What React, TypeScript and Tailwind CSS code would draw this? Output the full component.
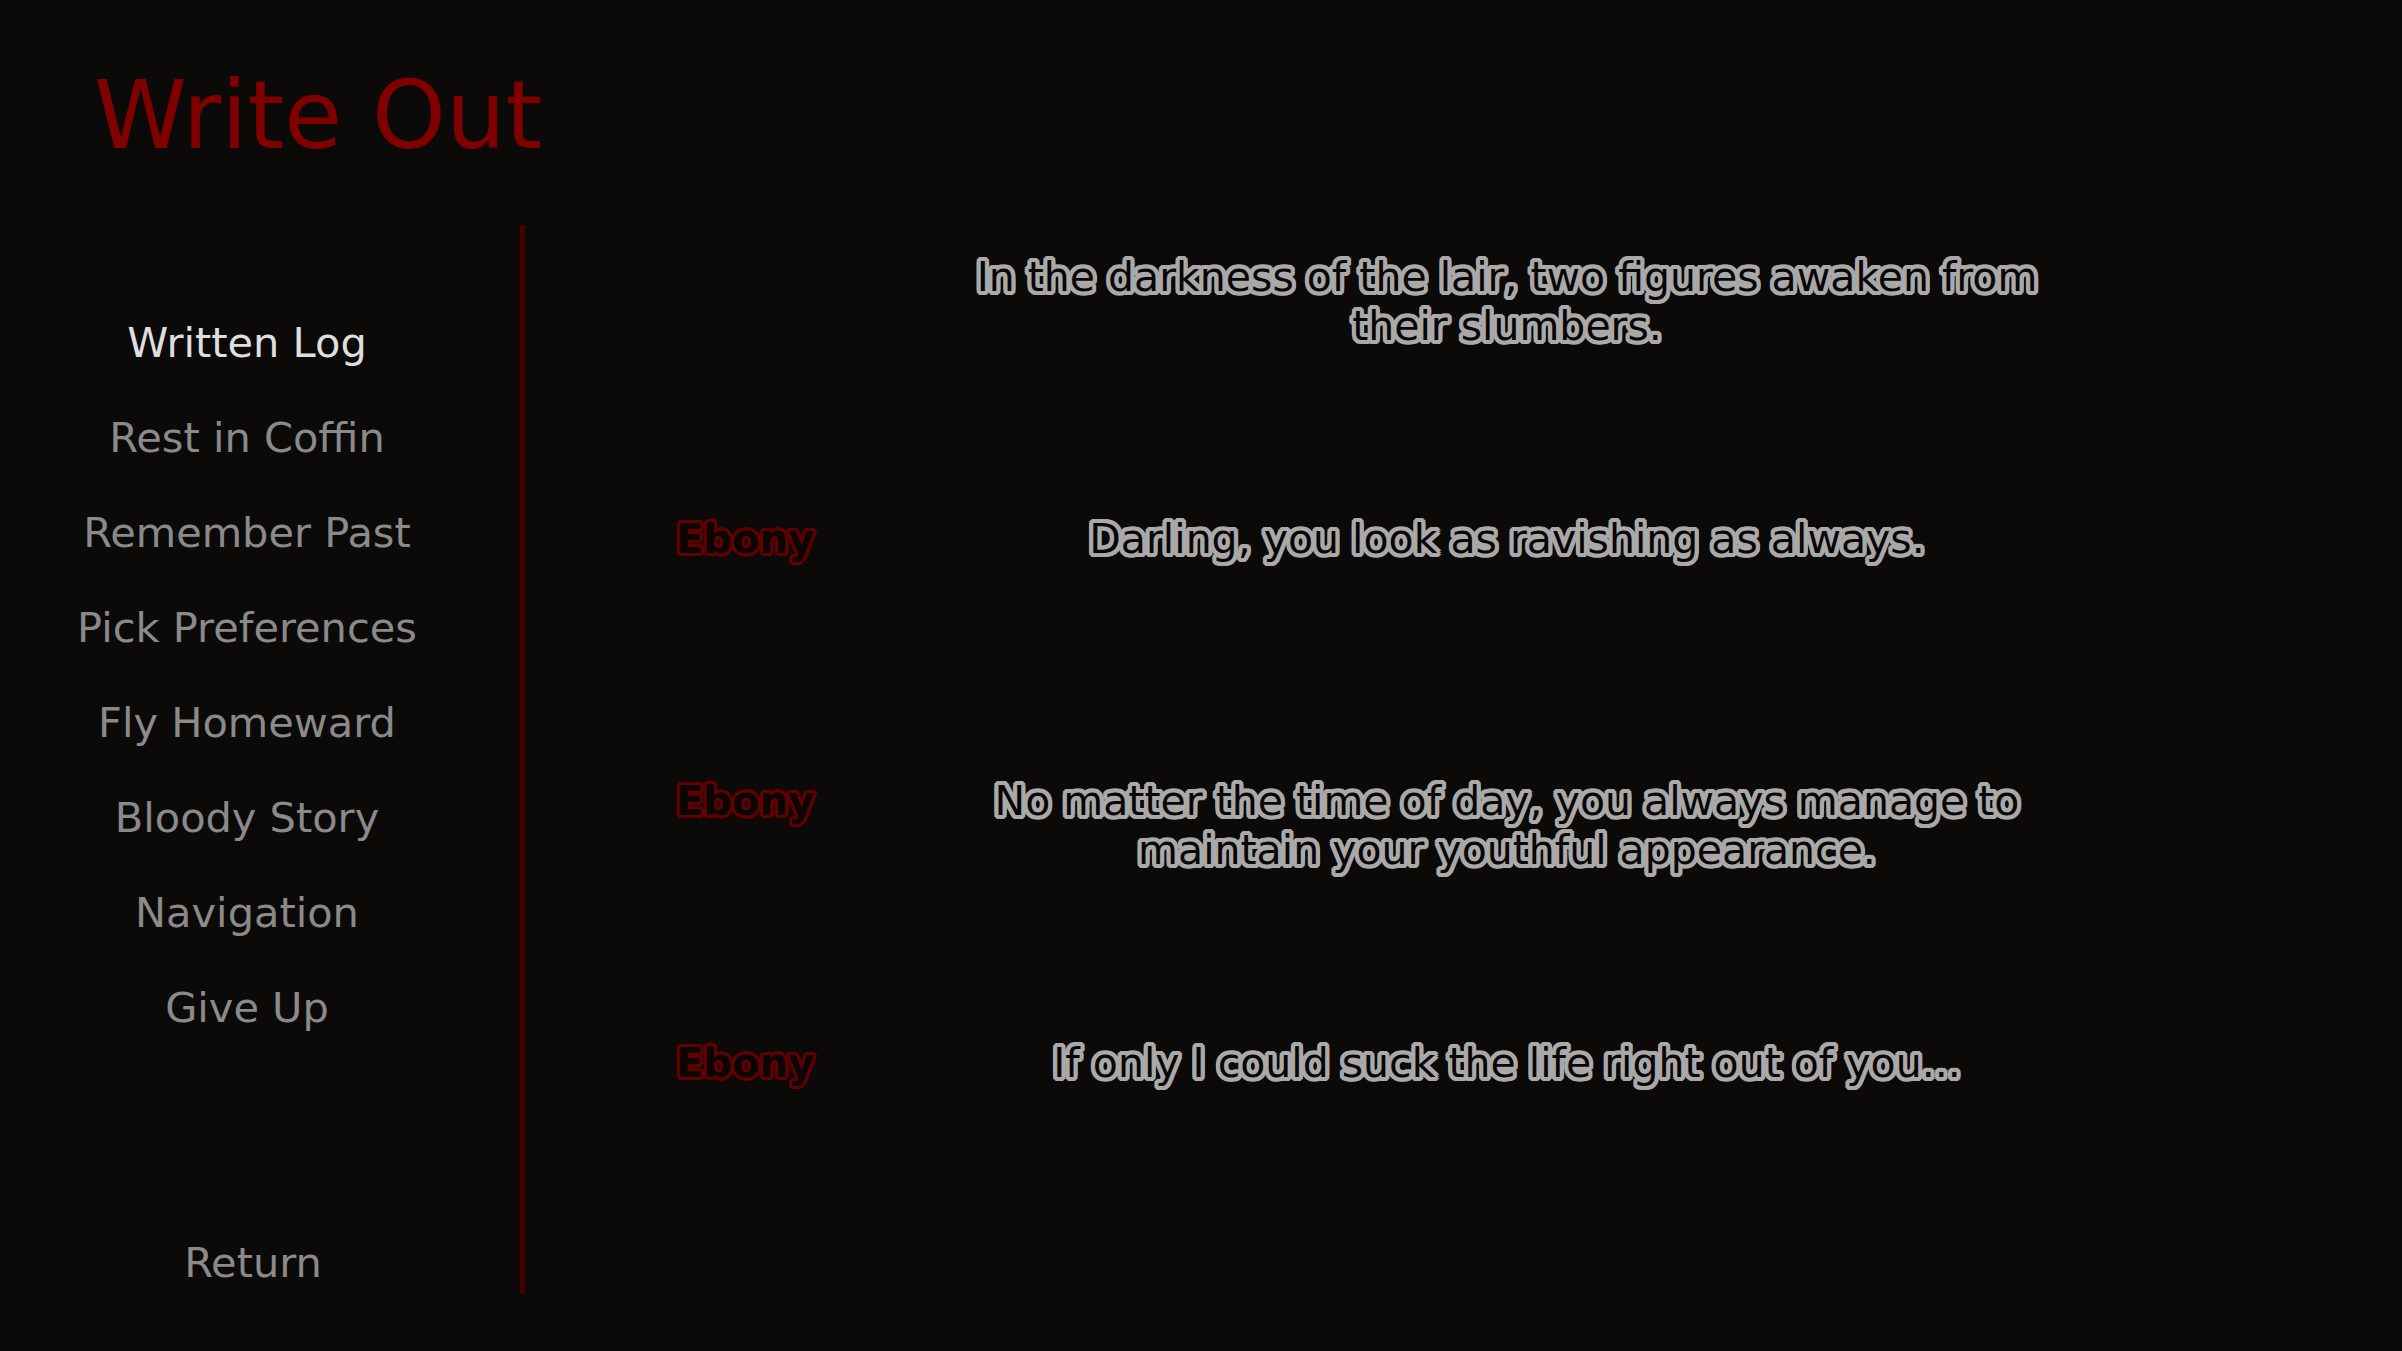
import React from "react";

const menuItems = [
  "Written Log",
  "Rest in Coffin",
  "Remember Past",
  "Pick Preferences",
  "Fly Homeward",
  "Bloody Story",
  "Navigation",
  "Give Up",
];

type Entry = { who?: string; what: string };

const history: Entry[] = [
  { what: "In the darkness of the lair, two figures awaken from their slumbers." },
  { who: "Ebony", what: "Darling, you look as ravishing as always." },
  { who: "Ebony", what: "No matter the time of day, you always manage to maintain your youthful appearance." },
  { who: "Ebony", what: "If only I could suck the life right out of you..." },
];

// outline look, like the game's text outlines
const grayOutline =
  "[text-shadow:4px_0_0_#a9a9a9,-4px_0_0_#a9a9a9,0_4px_0_#a9a9a9,0_-4px_0_#a9a9a9,3px_3px_0_#a9a9a9,-3px_3px_0_#a9a9a9,3px_-3px_0_#a9a9a9,-3px_-3px_0_#a9a9a9,4px_2px_0_#a9a9a9,4px_-2px_0_#a9a9a9,-4px_2px_0_#a9a9a9,-4px_-2px_0_#a9a9a9,2px_4px_0_#a9a9a9,-2px_4px_0_#a9a9a9,2px_-4px_0_#a9a9a9,-2px_-4px_0_#a9a9a9,2px_2px_0_#a9a9a9,-2px_-2px_0_#a9a9a9,2px_-2px_0_#a9a9a9,-2px_2px_0_#a9a9a9]";
const redOutline =
  "[text-shadow:3px_0_0_#620000,-3px_0_0_#620000,0_3px_0_#620000,0_-3px_0_#620000,2px_2px_0_#620000,-2px_2px_0_#620000,2px_-2px_0_#620000,-2px_-2px_0_#620000,3px_1px_0_#620000,3px_-1px_0_#620000,-3px_1px_0_#620000,-3px_-1px_0_#620000,1px_3px_0_#620000,-1px_3px_0_#620000,1px_-3px_0_#620000,-1px_-3px_0_#620000]";

const App: React.FC = () => {
  return (
    <div className="h-[1351px] w-full overflow-hidden bg-[#0c0909] font-['DejaVu_Sans',sans-serif]">
      <h1 className="pl-[94px] pt-[69px] text-[94px] leading-[94px] font-normal text-[#800000]">
        Write Out
      </h1>

      <div className="mt-[62px] flex">
        {/* left menu */}
        <nav className="flex h-[1069px] w-[520px] flex-col">
          <div className="flex w-[494px] flex-col pt-[70px]">
            {menuItems.map((item, i) => (
              <button
                key={item}
                className={`h-[95px] text-center text-[41.5px] leading-[95px] ${
                  i === 0 ? "text-[#dedede]" : "text-[#8a8a8a]"
                }`}
              >
                {item}
              </button>
            ))}
          </div>
          <button className="mt-[160px] h-[95px] w-[506px] text-center text-[41.5px] leading-[95px] text-[#8a8a8a]">
            Return
          </button>
        </nav>

        <div className="h-[1069px] w-[5px] bg-[#470000]" />

        {/* history */}
        <main className="flex-1 pt-[28px]">
          {history.map((h, i) => (
            <div key={i} className="flex h-[262px] pl-[151px]">
              <div className={`w-[276px] text-[40px] leading-[49px] font-bold text-[#0a0606] ${redOutline}`}>
                {h.who ?? ""}
              </div>
              <p className={`w-[1110px] text-center text-[41px] leading-[49px] text-[#0a0606] ${grayOutline}`}>
                {h.what}
              </p>
            </div>
          ))}
        </main>
      </div>
    </div>
  );
};

export default App;
